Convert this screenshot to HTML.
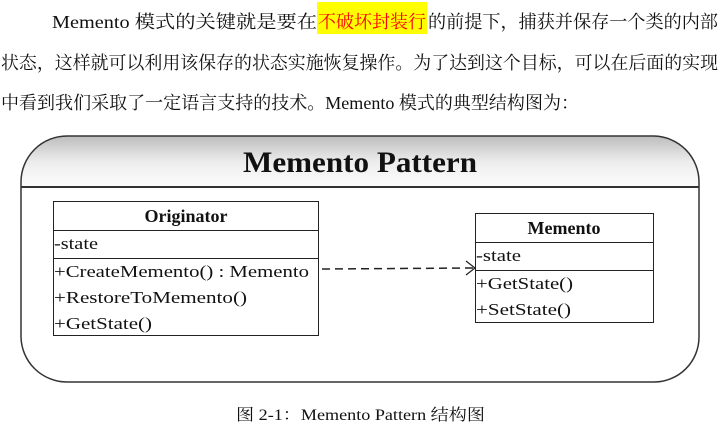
<!DOCTYPE html>
<html><head><meta charset="utf-8"><style>
html,body{margin:0;padding:0;background:#fff;width:725px;height:430px;overflow:hidden}
svg{display:block}
text{font-family:"Liberation Serif","Noto Serif CJK SC",serif;fill:#111}
</style></head><body>
<svg width="725" height="430" viewBox="0 0 725 430">
<defs>
<linearGradient id="g" x1="0" y1="0" x2="0" y2="1">
<stop offset="0" stop-color="#bdbdbd"/><stop offset="0.5" stop-color="#ececec"/><stop offset="1" stop-color="#fdfdfd"/>
</linearGradient>
</defs>
<rect x="317" y="2" width="110" height="32" fill="#ffff00"/>
<text x="52" y="28" font-size="18" textLength="265" lengthAdjust="spacingAndGlyphs">Memento  模式的关键就是要在</text>
<text x="318" y="28" font-size="18" fill="#ff0000" style="fill:#ff0000" textLength="108" lengthAdjust="spacingAndGlyphs">不破坏封装行</text>
<text x="428" y="28" font-size="18" textLength="290" lengthAdjust="spacingAndGlyphs">的前提下，捕获并保存一个类的内部</text>
<text x="1" y="69" font-size="18" textLength="717" lengthAdjust="spacingAndGlyphs">状态，这样就可以利用该保存的状态实施恢复操作。为了达到这个目标，可以在后面的实现</text>
<text x="1" y="109" font-size="18" textLength="578" lengthAdjust="spacingAndGlyphs">中看到我们采取了一定语言支持的技术。Memento 模式的典型结构图为：</text>

<path d="M21 187 L21 182 A46 46 0 0 1 67 136 L654 136 A46 46 0 0 1 699 182 L699 187 Z" fill="url(#g)"/>
<path d="M21 187 L21 182 A46 46 0 0 1 67 136 L654 136 A46 46 0 0 1 699 182 L699 337 A45 45 0 0 1 654 382 L67 382 A46 46 0 0 1 21 337 Z" fill="none" stroke="#333" stroke-width="1.5"/>
<line x1="21" y1="187" x2="699" y2="187" stroke="#333" stroke-width="2"/>
<text x="243" y="172" font-size="30" font-weight="bold" textLength="234" lengthAdjust="spacingAndGlyphs">Memento Pattern</text>

<rect x="53.5" y="201.5" width="265" height="134" fill="#fff" stroke="#222"/>
<line x1="53" y1="230.5" x2="319" y2="230.5" stroke="#222"/>
<line x1="53" y1="258.5" x2="319" y2="258.5" stroke="#222"/>
<text x="186" y="222" font-size="18" font-weight="bold" text-anchor="middle">Originator</text>
<text x="54" y="249" font-size="17" textLength="44" lengthAdjust="spacingAndGlyphs">-state</text>
<text x="54" y="277" font-size="17" textLength="255" lengthAdjust="spacingAndGlyphs">+CreateMemento() : Memento</text>
<text x="54" y="303" font-size="17" textLength="193" lengthAdjust="spacingAndGlyphs">+RestoreToMemento()</text>
<text x="54" y="329" font-size="17" textLength="98" lengthAdjust="spacingAndGlyphs">+GetState()</text>

<rect x="475.5" y="213.5" width="178" height="109" fill="#fff" stroke="#222"/>
<line x1="475" y1="242.5" x2="654" y2="242.5" stroke="#222"/>
<line x1="475" y1="270.5" x2="654" y2="270.5" stroke="#222"/>
<text x="564" y="234" font-size="18" font-weight="bold" text-anchor="middle">Memento</text>
<text x="476" y="261" font-size="17" textLength="45" lengthAdjust="spacingAndGlyphs">-state</text>
<text x="476" y="289" font-size="17" textLength="97" lengthAdjust="spacingAndGlyphs">+GetState()</text>
<text x="476" y="315" font-size="17" textLength="95" lengthAdjust="spacingAndGlyphs">+SetState()</text>

<line x1="322" y1="269" x2="474" y2="268" stroke="#222" stroke-width="1.5" stroke-dasharray="8,5"/>
<path d="M466 261 L475 268 L466 275" fill="none" stroke="#222" stroke-width="1.2"/>

<text x="236" y="420" font-size="16" textLength="249" lengthAdjust="spacingAndGlyphs">图 2-1：Memento Pattern 结构图</text>
</svg>
</body></html>
